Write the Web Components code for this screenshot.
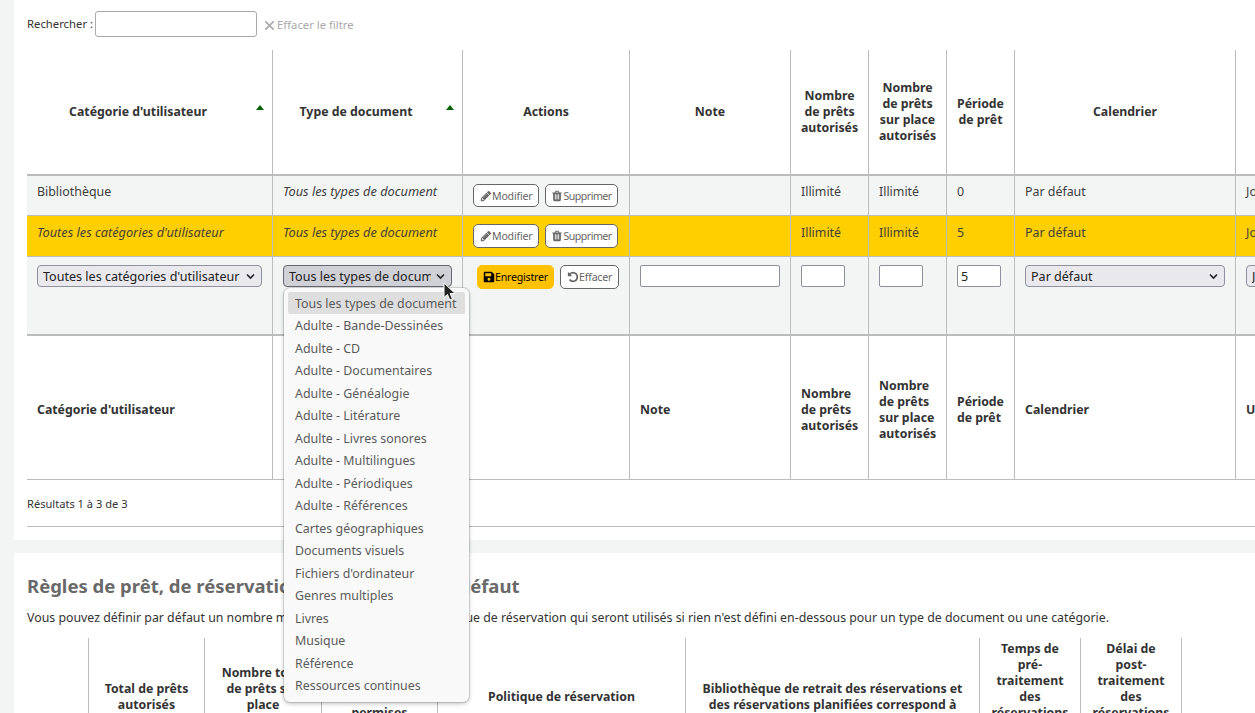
<!doctype html>
<html lang="fr">
<head>
<meta charset="utf-8">
<title>Règles de circulation</title>
<style>
  html, body { margin: 0; height: 713px; overflow: hidden; background: #f3f4f4; }
  body { font: 12.4px/16px "Noto Sans", sans-serif; color: #3f3f3f; }
</style>
</head>
<body>

<rules-page>
  <rules-section style="--top: 11px; --bottom: 13px">
    <search-bar></search-bar>
    <rule-table style="--cols: 245px 190px 167px 161px 78px 78px 68px 221px 300px">
      <rule-row kind="head" style="--h: 126px">
        <rule-cell sorted>Catégorie d'utilisateur</rule-cell>
        <rule-cell sorted>Type de document</rule-cell>
        <rule-cell>Actions</rule-cell>
        <rule-cell>Note</rule-cell>
        <rule-cell>Nombre de prêts autorisés</rule-cell>
        <rule-cell>Nombre de prêts sur place autorisés</rule-cell>
        <rule-cell>Période de prêt</rule-cell>
        <rule-cell>Calendrier</rule-cell>
        <rule-cell>Unité</rule-cell>
      </rule-row>
      <rule-row style="--h: 40px; --pad: 8px; --bg: #f3f4f4; --btn-h: 23px">
        <rule-cell>Bibliothèque</rule-cell>
        <rule-cell><em>Tous les types de document</em></rule-cell>
        <rule-cell actions>
          <rule-button icon="pencil">Modifier</rule-button>
          <rule-button icon="trash" narrow>Supprimer</rule-button>
        </rule-cell>
        <rule-cell></rule-cell>
        <rule-cell>Illimité</rule-cell>
        <rule-cell>Illimité</rule-cell>
        <rule-cell>0</rule-cell>
        <rule-cell>Par défaut</rule-cell>
        <rule-cell>Jours</rule-cell>
      </rule-row>
      <rule-row style="--h: 41px; --pad: 9px; --bg: #ffcf00">
        <rule-cell><em>Toutes les catégories d'utilisateur</em></rule-cell>
        <rule-cell><em>Tous les types de document</em></rule-cell>
        <rule-cell actions>
          <rule-button icon="pencil">Modifier</rule-button>
          <rule-button icon="trash" narrow>Supprimer</rule-button>
        </rule-cell>
        <rule-cell></rule-cell>
        <rule-cell>Illimité</rule-cell>
        <rule-cell>Illimité</rule-cell>
        <rule-cell>5</rule-cell>
        <rule-cell>Par défaut</rule-cell>
        <rule-cell>Jours</rule-cell>
      </rule-row>
      <rule-row kind="edit" style="--h: 79px; --pad: 8px; --bg: #f3f4f4">
        <rule-cell><rule-select style="width: 225px">Toutes les catégories d'utilisateur</rule-select></rule-cell>
        <rule-cell>
          <rule-select open style="width: 169px">Tous les types de document</rule-select>
          <type-menu>
            <menu-item active>Tous les types de document</menu-item>
            <menu-item>Adulte - Bande-Dessinées</menu-item>
            <menu-item>Adulte - CD</menu-item>
            <menu-item>Adulte - Documentaires</menu-item>
            <menu-item>Adulte - Généalogie</menu-item>
            <menu-item>Adulte - Litérature</menu-item>
            <menu-item>Adulte - Livres sonores</menu-item>
            <menu-item>Adulte - Multilingues</menu-item>
            <menu-item>Adulte - Périodiques</menu-item>
            <menu-item>Adulte - Références</menu-item>
            <menu-item>Cartes géographiques</menu-item>
            <menu-item>Documents visuels</menu-item>
            <menu-item>Fichiers d'ordinateur</menu-item>
            <menu-item>Genres multiples</menu-item>
            <menu-item>Livres</menu-item>
            <menu-item>Musique</menu-item>
            <menu-item>Référence</menu-item>
            <menu-item>Ressources continues</menu-item>
          </type-menu>
          <mouse-pointer></mouse-pointer>
        </rule-cell>
        <rule-cell actions edit>
          <rule-button icon="save" primary>Enregistrer</rule-button>
          <rule-button icon="undo">Effacer</rule-button>
        </rule-cell>
        <rule-cell><rule-input style="width: 140px"></rule-input></rule-cell>
        <rule-cell><rule-input style="width: 44px"></rule-input></rule-cell>
        <rule-cell><rule-input style="width: 44px"></rule-input></rule-cell>
        <rule-cell><rule-input style="width: 44px">5</rule-input></rule-cell>
        <rule-cell><rule-select style="width: 200px">Par défaut</rule-select></rule-cell>
        <rule-cell><rule-select style="width: 100px">Jours</rule-select></rule-cell>
      </rule-row>
      <rule-row kind="foot" style="--h: 144px">
        <rule-cell>Catégorie d'utilisateur</rule-cell>
        <rule-cell></rule-cell>
        <rule-cell></rule-cell>
        <rule-cell>Note</rule-cell>
        <rule-cell>Nombre de prêts autorisés</rule-cell>
        <rule-cell>Nombre de prêts sur place autorisés</rule-cell>
        <rule-cell>Période de prêt</rule-cell>
        <rule-cell>Calendrier</rule-cell>
        <rule-cell>Unité</rule-cell>
      </rule-row>
    </rule-table>
    <table-info>Résultats 1 à 3 de 3</table-info>
  </rules-section>

  <rules-section style="--top: 22px; --bottom: 0px">
    <section-title>Règles de prêt, de réservation et de retour par défaut</section-title>
    <section-note>Vous pouvez définir par défaut un nombre maximum de prêts et une politique de réservation qui seront utilisés si rien n'est défini en-dessous pour un type de document ou une catégorie.</section-note>
    <rule-table style="--cols: 61px 116px 117px 116px 248px 294px 101px 101px 74px">
      <rule-row kind="head" style="--h: 120px">
        <rule-cell></rule-cell>
        <rule-cell>Total de prêts<br>autorisés</rule-cell>
        <rule-cell>Nombre total<br>de prêts sur<br>place<br>autorisés</rule-cell>
        <rule-cell>Nombre de<br>réservations<br>permises</rule-cell>
        <rule-cell>Politique de réservation</rule-cell>
        <rule-cell offset>Bibliothèque de retrait des réservations et<br>des réservations planifiées correspond à<br>la politique</rule-cell>
        <rule-cell>Temps de<br>pré-<br>traitement<br>des<br>réservations<br>(en<br>jours)</rule-cell>
        <rule-cell>Délai de<br>post-<br>traitement<br>des<br>réservations<br>(en<br>jours)</rule-cell>
        <rule-cell></rule-cell>
      </rule-row>
    </rule-table>
  </rules-section>
</rules-page>

<script>
const ICONS = {
  pencil: { box: "0 0 1792 1792", d: "M491 1536l91-91-235-235-91 91v107h128v128h107zm523-928q0-22-22-22-10 0-17 7l-542 542q-7 7-7 17 0 22 22 22 10 0 17-7l542-542q7-7 7-17zm-54-192l416 416-832 832h-416v-416zm683 96q0 53-37 90l-166 166-416-416 166-165q36-38 90-38 53 0 91 38l235 234q37 39 37 91z" },
  trash: { box: "0 0 1792 1792", d: "M704 1376v-704q0-14-9-23t-23-9h-64q-14 0-23 9t-9 23v704q0 14 9 23t23 9h64q14 0 23-9t9-23zm256 0v-704q0-14-9-23t-23-9h-64q-14 0-23 9t-9 23v704q0 14 9 23t23 9h64q14 0 23-9t9-23zm256 0v-704q0-14-9-23t-23-9h-64q-14 0-23 9t-9 23v704q0 14 9 23t23 9h64q14 0 23-9t9-23zm-544-992h448l-48-117q-7-9-17-11h-317q-10 2-17 11zm928 32v64q0 14-9 23t-23 9h-96v948q0 83-47 143.5t-113 60.5h-832q-66 0-113-58.5t-47-141.5v-952h-96q-14 0-23-9t-9-23v-64q0-14 9-23t23-9h309l70-167q15-37 54-63t79-26h320q40 0 79 26t54 63l70 167h309q14 0 23 9t9 23z" },
  save: { box: "-32 0 512 512", d: "M433.941 129.941l-83.882-83.882A48 48 0 0 0 316.118 32H48C21.49 32 0 53.49 0 80v352c0 26.51 21.49 48 48 48h352c26.51 0 48-21.49 48-48V163.882a48 48 0 0 0-14.059-33.941zM224 416c-35.346 0-64-28.654-64-64 0-35.346 28.654-64 64-64s64 28.654 64 64c0 35.346-28.654 64-64 64zm96-304.52V212c0 6.627-5.373 12-12 12H76c-6.627 0-12-5.373-12-12V108c0-6.627 5.373-12 12-12h228.52c3.183 0 6.235 1.264 8.485 3.515l3.48 3.48A11.996 11.996 0 0 1 320 111.48z" },
  undo: { box: "0 0 1792 1792", d: "M1664 896q0 156-61 298t-164 245-245 164-298 61q-172 0-327-72.5t-264-204.5q-7-10-6.5-22.5t8.5-20.5l137-138q10-9 25-9 16 2 23 12 73 95 179 147t225 52q104 0 198.5-40.5t163.5-109.5 109.5-163.5 40.5-198.5-40.5-198.5-109.5-163.5-163.5-109.5-198.5-40.5q-98 0-188 35.5t-160 101.5l137 138q31 30 14 69-17 40-59 40h-448q-26 0-45-19t-19-45v-448q0-42 40-59 39-17 69 14l130 129q107-101 244.5-156.5t284.5-55.5q156 0 298 61t245 164 164 245 61 298z" },
  times: { box: "0 0 1792 1792", d: "M470 330l426 426 426-426 140 140-426 426 426 426-140 140-426-426-426 426-140-140 426-426-426-426z" }
};

// small helper: every element here is just a shadow root with fixed markup
class ShadowElement extends HTMLElement {
  constructor(markup) {
    super();
    this.attachShadow({ mode: "open" });
    this.shadowRoot.innerHTML = markup;
  }
}

class RuleIcon extends ShadowElement {
  static get observedAttributes() {
    return ["name"];
  }
  constructor() {
    super(`
      <style>
        :host { display: inline-block; width: var(--size, 12px); height: var(--size, 12px); flex: none; }
        svg { display: block; width: 100%; height: 100%; fill: currentColor; }
      </style>
      <svg viewBox="0 0 1792 1792"><path></path></svg>
    `);
  }
  attributeChangedCallback(name, oldValue, newValue) {
    const icon = ICONS[newValue];
    if (icon) {
      this.shadowRoot.querySelector("svg").setAttribute("viewBox", icon.box);
      this.shadowRoot.querySelector("path").setAttribute("d", icon.d);
    }
  }
}

class RulesPage extends ShadowElement {
  constructor() {
    super(`
      <style>
        :host { display: flex; flex-direction: column; gap: 13px; padding-left: 14px; height: 713px; overflow: hidden; }
      </style>
      <slot></slot>
    `);
  }
}

class RulesSection extends ShadowElement {
  constructor() {
    super(`
      <style>
        :host { display: block; background: #fff; padding: var(--top) 0 var(--bottom) 13px; min-width: 0; }
      </style>
      <slot></slot>
    `);
  }
}

class SearchBar extends ShadowElement {
  constructor() {
    super(`
      <style>
        :host { display: flex; align-items: center; height: 26px; margin-bottom: 13px; font-size: 11.3px; color: #333; }
        .field { box-sizing: border-box; width: 162px; height: 26px; margin-left: 2px; background: #fff; border: 1px solid #aaa; border-radius: 3px; }
        .clear { display: flex; align-items: center; margin-left: 5px; padding-top: 2px; color: #aaa; }
        rule-icon { --size: 15px; }
      </style>
      <span>Rechercher :</span>
      <div class="field"></div>
      <span class="clear"><rule-icon name="times"></rule-icon>Effacer le filtre</span>
    `);
  }
}

class RuleTable extends ShadowElement {
  constructor() {
    super(`
      <style>
        :host { display: block; }
      </style>
      <slot></slot>
    `);
  }
}

class RuleRow extends ShadowElement {
  constructor() {
    super(`
      <style>
        :host { display: grid; grid-template-columns: var(--cols); box-sizing: border-box; height: var(--h); background: var(--bg, #fff); border-bottom: 1px solid #bcbcbc; }
        :host([kind="head"]), :host([kind="edit"]) { border-bottom-width: 2px; }
      </style>
      <slot></slot>
    `);
  }
  connectedCallback() {
    // head and foot cells take their look from the row they are in
    const kind = this.getAttribute("kind");
    if (kind === "head" || kind === "foot") {
      Array.from(this.children).forEach((cell) => cell.setAttribute("role-kind", kind));
    }
  }
}

class RuleCell extends ShadowElement {
  constructor() {
    super(`
      <style>
        :host { display: block; position: relative; box-sizing: border-box; padding: var(--pad, 8px) 10px 0; border-left: 1px solid #bcbcbc; min-width: 0; }
        :host(:first-child) { border-left: 0; }
        :host([role-kind]) { display: flex; align-items: center; padding-top: 0; font-size: 12.3px; font-weight: 700; color: #333; }
        :host([role-kind="head"]) { justify-content: center; text-align: center; }
        :host([role-kind="foot"]) { padding-top: 5px; }
        :host([sorted]) { padding-right: 33px; }
        :host([offset]) { padding-top: 16px; }
        :host([actions]) { display: flex; gap: 6px; align-items: flex-start; padding-top: 8px; }
        :host([edit]) { padding-left: 14px; }
        .arrow { display: none; position: absolute; top: 55px; right: 8px; width: 0; height: 0; border: 4px solid transparent; border-top: 0; border-bottom: 5px solid #006100; }
        :host([sorted]) .arrow { display: block; }
        ::slotted(em) { display: block; margin-top: -1px; font-size: 12.75px; line-height: 16px; white-space: nowrap; }
      </style>
      <slot></slot>
      <span class="arrow"></span>
    `);
  }
}

class RuleButton extends ShadowElement {
  constructor() {
    super(`
      <style>
        :host { display: inline-flex; align-items: center; box-sizing: border-box; height: var(--btn-h, 24px); padding: 0 6px; background: #fff; border: 1px solid #666; border-radius: 5px; font-size: 10.6px; letter-spacing: -.2px; color: #666; white-space: nowrap; }
        :host([narrow]) { padding: 0 5px; letter-spacing: -.5px; }
        :host([primary]) { padding: 0 5px; background: #ffc100; border-color: #ffc100; color: #000; }
        rule-icon { --size: 12px; }
      </style>
      <rule-icon></rule-icon><slot></slot>
    `);
  }
  connectedCallback() {
    this.shadowRoot.querySelector("rule-icon").setAttribute("name", this.getAttribute("icon"));
  }
}

class RuleSelect extends ShadowElement {
  constructor() {
    super(`
      <style>
        :host { display: block; position: relative; box-sizing: border-box; height: 22px; padding: 0 20px 0 5px; background: #e9e8ed; border: 1px solid #8f8f9d; border-radius: 4px; font-size: 12.55px; line-height: 22px; color: #222; white-space: nowrap; }
        :host([open]) { background: #d0d0d7; border-color: #676774; }
        .label { height: 20px; overflow: hidden; }
        svg { position: absolute; right: 6px; top: 7px; width: 9px; height: 7px; fill: none; stroke: #222; stroke-width: 1.6; }
      </style>
      <div class="label"><slot></slot></div>
      <svg viewBox="0 0 9 7"><path d="M1 1.5l3.5 3.5 3.5-3.5"></path></svg>
    `);
  }
}

class RuleInput extends ShadowElement {
  constructor() {
    super(`
      <style>
        :host { display: block; box-sizing: border-box; height: 22px; padding: 0 3px; background: #fff; border: 1px solid #8f8f9d; border-radius: 2px; font-size: 12.55px; line-height: 22px; color: #222; }
      </style>
      <slot></slot>
    `);
  }
}

class TypeMenu extends ShadowElement {
  constructor() {
    super(`
      <style>
        :host { display: block; position: absolute; z-index: 5; left: 11px; top: 31px; width: 185px; box-sizing: border-box; height: 414px; padding: 3.6px 4px 0; background: #f9f9f9; border-radius: 6px; box-shadow: 0 0 1px 1px rgba(0,0,0,.14), 0 2px 4px rgba(0,0,0,.22); }
      </style>
      <slot></slot>
    `);
  }
}

class MenuItem extends ShadowElement {
  constructor() {
    super(`
      <style>
        :host { display: block; height: 22.5px; padding-left: 7px; border-radius: 2px; font-size: 12.4px; line-height: 23px; color: #5b5b5b; white-space: nowrap; }
        :host([active]) { background: #dedede; }
      </style>
      <slot></slot>
    `);
  }
}

class MousePointer extends ShadowElement {
  constructor() {
    super(`
      <style>
        :host { display: block; position: absolute; z-index: 6; left: 170px; top: 25px; width: 14px; height: 19px; }
        svg { display: block; }
      </style>
      <svg width="14" height="19" viewBox="0 0 14 19"><path d="M1 1v14.5l3.5-3 2.3 5.5 2.6-1.1-2.3-5.4h5z" fill="#222" stroke="#fff" stroke-width="1"></path></svg>
    `);
  }
}

class TableInfo extends ShadowElement {
  constructor() {
    super(`
      <style>
        :host { display: block; height: 47px; box-sizing: border-box; padding-top: 16px; border-bottom: 1px solid #bcbcbc; font-size: 11.1px; color: #333; }
      </style>
      <slot></slot>
    `);
  }
}

class SectionTitle extends ShadowElement {
  constructor() {
    super(`
      <style>
        :host { display: block; font-size: 18.5px; font-weight: 700; line-height: 22px; color: #696969; white-space: nowrap; }
      </style>
      <slot></slot>
    `);
  }
}

class SectionNote extends ShadowElement {
  constructor() {
    super(`
      <style>
        :host { display: block; margin: 13px 0 12px; font-size: 12.35px; line-height: 16px; color: #333; white-space: nowrap; }
      </style>
      <slot></slot>
    `);
  }
}

customElements.define("rule-icon", RuleIcon);
customElements.define("rules-page", RulesPage);
customElements.define("rules-section", RulesSection);
customElements.define("search-bar", SearchBar);
customElements.define("rule-table", RuleTable);
customElements.define("rule-row", RuleRow);
customElements.define("rule-cell", RuleCell);
customElements.define("rule-button", RuleButton);
customElements.define("rule-select", RuleSelect);
customElements.define("rule-input", RuleInput);
customElements.define("type-menu", TypeMenu);
customElements.define("menu-item", MenuItem);
customElements.define("mouse-pointer", MousePointer);
customElements.define("table-info", TableInfo);
customElements.define("section-title", SectionTitle);
customElements.define("section-note", SectionNote);
</script>
</body>
</html>
